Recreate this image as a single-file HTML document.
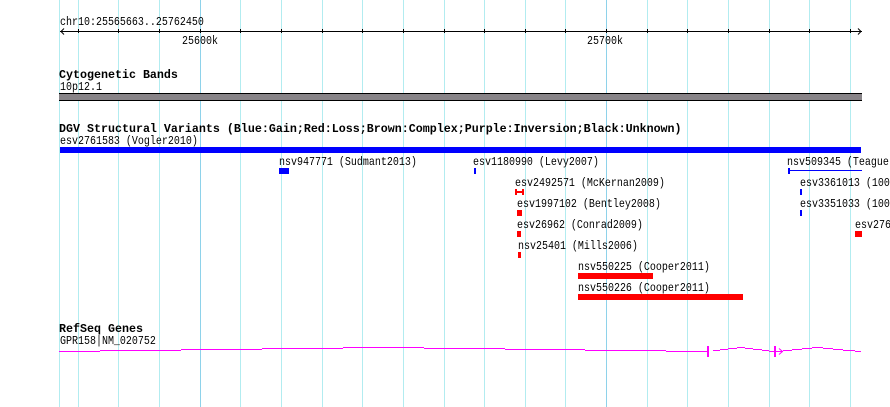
<!DOCTYPE html>
<html>
<head>
<meta charset="utf-8">
<style>
html,body{margin:0;padding:0;background:#fff;width:890px;height:407px;overflow:hidden}
svg{display:block}
text{font-family:"Liberation Mono","DejaVu Sans Mono",monospace;font-size:12px;fill:#000;white-space:pre}
text.b{font-weight:bold;font-size:11.67px}
</style>
</head>
<body>
<svg width="890" height="407" viewBox="0 0 890 407" xmlns="http://www.w3.org/2000/svg" shape-rendering="crispEdges">
<g fill="#b2ecf0">
<rect x="59" y="0" width="1" height="407"/><rect x="78" y="0" width="1" height="407"/><rect x="118" y="0" width="1" height="407"/><rect x="159" y="0" width="1" height="407"/>
<rect x="240" y="0" width="1" height="407"/><rect x="281" y="0" width="1" height="407"/><rect x="322" y="0" width="1" height="407"/><rect x="362" y="0" width="1" height="407"/>
<rect x="403" y="0" width="1" height="407"/><rect x="444" y="0" width="1" height="407"/><rect x="484" y="0" width="1" height="407"/><rect x="525" y="0" width="1" height="407"/>
<rect x="565" y="0" width="1" height="407"/><rect x="647" y="0" width="1" height="407"/><rect x="687" y="0" width="1" height="407"/><rect x="728" y="0" width="1" height="407"/>
<rect x="769" y="0" width="1" height="407"/><rect x="809" y="0" width="1" height="407"/><rect x="850" y="0" width="1" height="407"/>
</g>
<g fill="#8ed2ea"><rect x="200" y="0" width="1" height="407"/><rect x="606" y="0" width="1" height="407"/></g>

<!-- ruler -->
<rect x="60" y="31" width="802" height="1" fill="#000"/>
<g fill="#000">
<rect x="78" y="29" width="1" height="4"/><rect x="118" y="29" width="1" height="4"/><rect x="159" y="29" width="1" height="4"/><rect x="200" y="29" width="1" height="4"/>
<rect x="240" y="29" width="1" height="4"/><rect x="281" y="29" width="1" height="4"/><rect x="322" y="29" width="1" height="4"/><rect x="362" y="29" width="1" height="4"/>
<rect x="403" y="29" width="1" height="4"/><rect x="444" y="29" width="1" height="4"/><rect x="484" y="29" width="1" height="4"/><rect x="525" y="29" width="1" height="4"/>
<rect x="565" y="29" width="1" height="4"/><rect x="606" y="29" width="1" height="4"/><rect x="647" y="29" width="1" height="4"/><rect x="687" y="29" width="1" height="4"/>
<rect x="728" y="29" width="1" height="4"/><rect x="769" y="29" width="1" height="4"/><rect x="809" y="29" width="1" height="4"/><rect x="850" y="29" width="1" height="4"/>
</g>
<path d="M64 28.5L61 31.5L64 34.5M858 28.5L861 31.5L858 34.5" fill="none" stroke="#000" stroke-width="1" shape-rendering="auto"/>

<!-- cytobands -->
<text class="b" x="59" y="78">Cytogenetic Bands</text>
<rect x="59" y="93" width="803" height="8" fill="#000"/>
<rect x="59" y="94" width="803" height="6" fill="#888488"/>

<!-- DGV -->
<text class="b" x="59" y="132">DGV Structural Variants (Blue:Gain;Red:Loss;Brown:Complex;Purple:Inversion;Black:Unknown)</text>
<rect x="60" y="147" width="801" height="6" fill="#00f"/>

<rect x="279" y="168" width="10" height="6" fill="#00f"/>
<rect x="474" y="168" width="2" height="6" fill="#00f"/>
<rect x="788" y="168" width="2" height="6" fill="#00f"/>
<rect x="788" y="170" width="74" height="1" fill="#00f"/>

<g fill="#f00"><rect x="515" y="189" width="2" height="6"/><rect x="522" y="189" width="2" height="6"/><rect x="515" y="191" width="9" height="2"/></g>
<rect x="800" y="189" width="2" height="6" fill="#00f"/>

<rect x="517" y="210" width="5" height="6" fill="#f00"/>
<rect x="800" y="210" width="2" height="6" fill="#00f"/>

<rect x="517" y="231" width="4" height="6" fill="#f00"/>
<rect x="855" y="231" width="7" height="6" fill="#f00"/>

<rect x="518" y="252" width="3" height="6" fill="#f00"/>

<rect x="578" y="273" width="75" height="6" fill="#f00"/>
<rect x="578" y="294" width="165" height="6" fill="#f00"/>

<!-- RefSeq -->
<text class="b" x="59" y="332">RefSeq Genes</text>
<g fill="#f0f">
<rect x="59" y="351" width="41" height="1"/><rect x="100" y="350" width="81" height="1"/><rect x="181" y="349" width="81" height="1"/><rect x="262" y="348" width="81" height="1"/>
<rect x="343" y="347" width="81" height="1"/><rect x="424" y="348" width="81" height="1"/>
<rect x="505" y="349" width="80" height="1"/><rect x="585" y="350" width="81" height="1"/><rect x="666" y="351" width="41" height="1"/>
<rect x="707" y="346" width="2" height="11"/>
<rect x="713" y="350" width="7" height="1"/><rect x="720" y="349" width="8" height="1"/><rect x="728" y="348" width="9" height="1"/><rect x="737" y="347" width="8" height="1"/><rect x="745" y="348" width="8" height="1"/><rect x="753" y="349" width="9" height="1"/><rect x="762" y="350" width="7" height="1"/><rect x="769" y="351" width="9" height="1"/>
<rect x="774" y="346" width="2" height="11"/>
<rect x="783" y="350" width="9" height="1"/><rect x="792" y="349" width="10" height="1"/><rect x="802" y="348" width="10" height="1"/><rect x="812" y="347" width="11" height="1"/><rect x="823" y="348" width="10" height="1"/><rect x="833" y="349" width="10" height="1"/><rect x="843" y="350" width="12" height="1"/><rect x="855" y="351" width="6" height="1"/>
<rect x="778" y="351" width="5" height="1"/>
</g>
<path d="M779 348.5L782.5 351.5L779 354.5" fill="none" stroke="#f0f" stroke-width="1" shape-rendering="auto"/>

<!-- regular labels: 12px glyphs compressed to the 6px cell -->
<g transform="scale(0.83333,1)">
<text x="72" y="25">chr10:25565663..25762450</text>
<text x="218.4" y="44">25600k</text>
<text x="704.4" y="44">25700k</text>
<text x="72" y="90">10p12.1</text>
<text x="72" y="144">esv2761583 (Vogler2010)</text>
<text x="334.8" y="165">nsv947771 (Sudmant2013)</text>
<text x="567.6" y="165">esv1180990 (Levy2007)</text>
<text x="944.4" y="165">nsv509345 (Teague</text>
<text x="618" y="186">esv2492571 (McKernan2009)</text>
<text x="960" y="186">esv3361013 (100</text>
<text x="620.4" y="207">esv1997102 (Bentley2008)</text>
<text x="960" y="207">esv3351033 (100</text>
<text x="620.4" y="228">esv26962 (Conrad2009)</text>
<text x="1026" y="228">esv276</text>
<text x="621.6" y="249">nsv25401 (Mills2006)</text>
<text x="693.6" y="270">nsv550225 (Cooper2011)</text>
<text x="693.6" y="291">nsv550226 (Cooper2011)</text>
<text x="72" y="344">GPR158|NM_020752</text>
</g>
</svg>
</body>
</html>
